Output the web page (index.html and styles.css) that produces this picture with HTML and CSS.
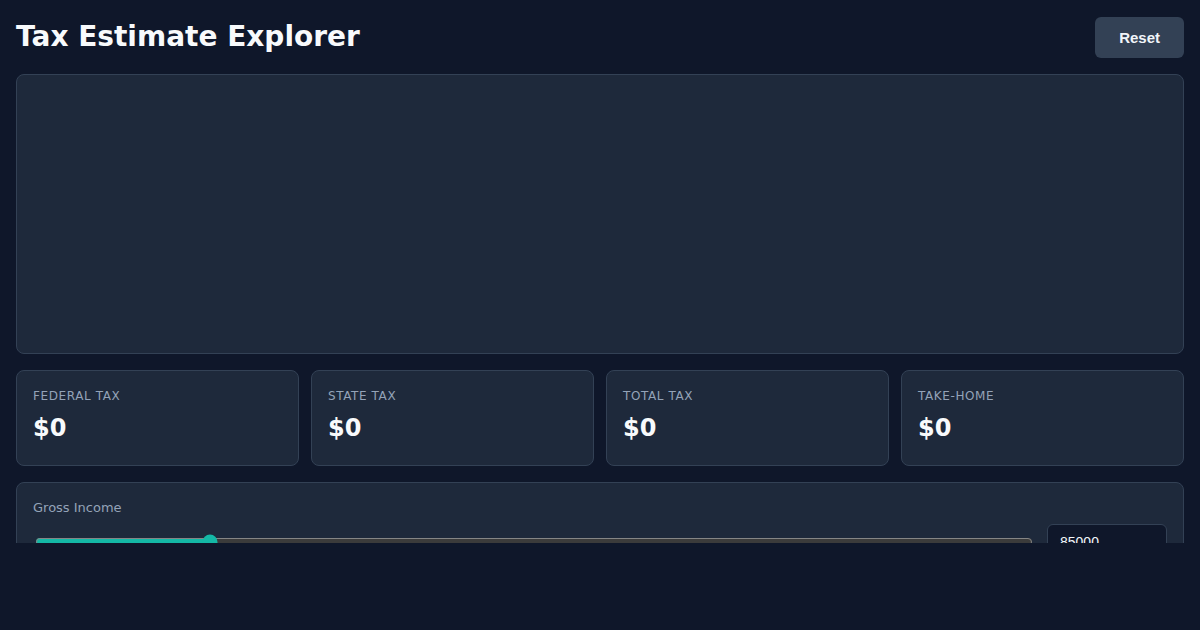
FILE: index.html
```html
<!DOCTYPE html>
<html lang="en">
<head>
<meta charset="utf-8">
<title>Tax Estimate Explorer</title>
<link rel="stylesheet" href="styles.css">
</head>
<body>
<div class="app">
  <header class="header">
    <h1 class="title">Tax Estimate Explorer</h1>
    <button class="reset-btn" type="button">Reset</button>
  </header>
  <section class="chart-panel"></section>
  <section class="cards">
    <div class="card">
      <div class="card-label">Federal Tax</div>
      <div class="card-value">$0</div>
    </div>
    <div class="card">
      <div class="card-label">State Tax</div>
      <div class="card-value">$0</div>
    </div>
    <div class="card">
      <div class="card-label">Total Tax</div>
      <div class="card-value">$0</div>
    </div>
    <div class="card">
      <div class="card-label">Take-home</div>
      <div class="card-value">$0</div>
    </div>
  </section>
  <section class="controls">
    <label class="control-label" for="income">Gross Income</label>
    <div class="control-row">
      <input class="range" id="income" type="range" min="0" max="500000" step="1000" value="85000">
      <input class="number" type="text" value="85000">
    </div>
  </section>
</div>
</body>
</html>
```
FILE: styles.css
```css
html, body {
  margin: 0;
  background: #0f172a;
}
body {
  font-family: "DejaVu Sans", sans-serif;
  color: #f1f5f9;
}
.app {
  box-sizing: border-box;
  height: 543px;
  overflow: hidden;
  padding: 16px;
  display: flex;
  flex-direction: column;
  gap: 16px;
}
.header {
  display: flex;
  align-items: flex-start;
  justify-content: space-between;
  flex: none;
  height: 42px;
}
.title {
  margin: 0;
  font-size: 28px;
  line-height: 41px;
  font-weight: 700;
  color: #f8fafc;
}
.reset-btn {
  margin-top: 1px;
  font-family: "Liberation Sans", Arial, sans-serif;
  font-size: 15px;
  font-weight: 700;
  line-height: 17px;
  padding: 12px 24px;
  border: none;
  border-radius: 6px;
  background: #334155;
  color: #f1f5f9;
}
.chart-panel {
  flex: none;
  box-sizing: border-box;
  height: 280px;
  background: #1e293b;
  border: 1px solid #334155;
  border-radius: 8px;
}
.cards {
  flex: none;
  display: grid;
  grid-template-columns: repeat(4, 1fr);
  gap: 12px;
}
.card {
  box-sizing: border-box;
  height: 96px;
  background: #1e293b;
  border: 1px solid #334155;
  border-radius: 8px;
  padding: 16px;
}
.card-label {
  font-size: 12px;
  line-height: 18px;
  letter-spacing: 0.05em;
  text-transform: uppercase;
  color: #94a3b8;
  margin-bottom: 8px;
}
.card-value {
  font-size: 24px;
  line-height: 30px;
  font-weight: 700;
  color: #f8fafc;
}
.controls {
  flex: none;
  background: #1e293b;
  border: 1px solid #334155;
  border-radius: 8px;
  padding: 16px;
}
.control-label {
  display: block;
  font-size: 13px;
  line-height: 18px;
  color: #94a3b8;
  margin-bottom: 7px;
}
.control-row {
  display: flex;
  align-items: center;
  gap: 12px;
}
.range {
  flex: 1;
  min-width: 0;
  accent-color: #14b8a6;
  color-scheme: dark;
}
.number {
  box-sizing: border-box;
  width: 120px;
  height: 36px;
  padding: 0 12px;
  font-family: "Liberation Sans", Arial, sans-serif;
  font-size: 14px;
  color: #f1f5f9;
  background: #0f172a;
  border: 1px solid #334155;
  border-radius: 6px;
}
```
